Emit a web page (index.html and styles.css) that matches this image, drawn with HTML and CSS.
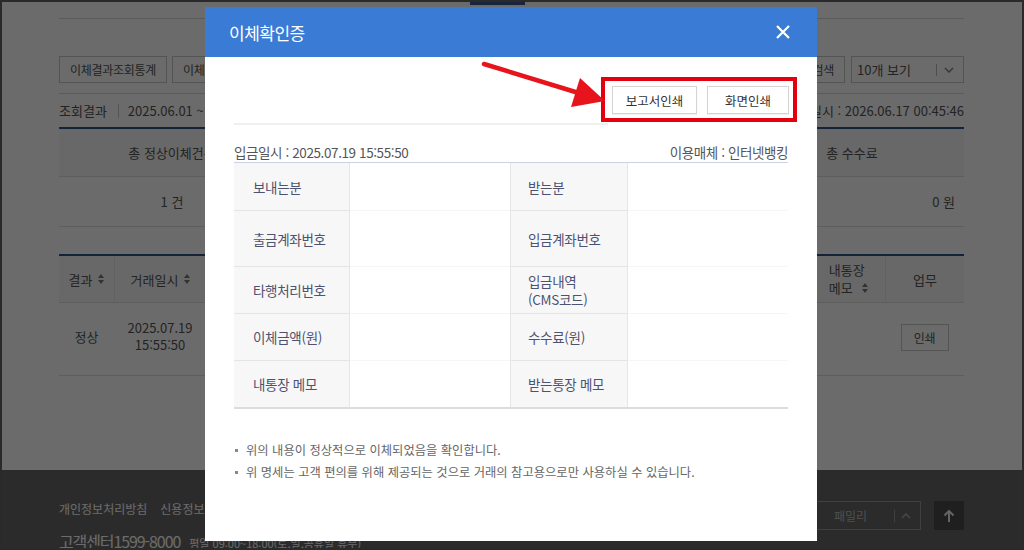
FILE: index.html
```html
<!DOCTYPE html>
<html lang="ko">
<head>
<meta charset="utf-8">
<title>이체확인증</title>
<link rel="stylesheet" href="styles.css">
</head>
<body>
<div class="frame">
  <div class="page">
    <div class="tabmark"></div>
    <div class="topline"></div>
    <div class="toolbar">
      <div class="tb-left">
        <button class="pbtn">이체결과조회통계</button>
        <button class="pbtn">이체결과조회</button>
      </div>
      <div class="tb-right">
        <button class="pbtn">상세검색</button>
        <div class="pselect"><span>10개 보기</span><i class="sep"></i><svg class="chev" width="10" height="6" viewBox="0 0 10 6"><path d="M1 1l4 4 4-4" fill="none" stroke="#888" stroke-width="1.6"/></svg></div>
      </div>
    </div>
    <div class="result">
      <div class="res-left"><span class="res-label">조회결과</span><i class="vsep"></i><span>2025.06.01 ~ 2025.07.31</span></div>
      <div class="res-right">조회일시 : 2026.06.17 00:45:46</div>
    </div>
    <div class="summary">
      <div class="sum-row sum-head">
        <div class="sc1">총 정상이체건수</div>
        <div class="sc2">총 이체금액</div>
        <div class="sc3">총 수수료</div>
      </div>
      <div class="sum-row sum-data">
        <div class="sc1">1 건</div>
        <div class="sc2">0 원</div>
        <div class="sc3 right">0 원</div>
      </div>
    </div>
    <div class="list">
      <div class="list-row list-head">
        <div class="lc1">결과 <svg class="sort" width="6" height="10" viewBox="0 0 6 10"><path d="M3 0L6 4H0zM3 10L0 6h6z" fill="#777"/></svg></div>
        <div class="lc2">거래일시 <svg class="sort" width="6" height="10" viewBox="0 0 6 10"><path d="M3 0L6 4H0zM3 10L0 6h6z" fill="#777"/></svg></div>
        <div class="lcmid"></div>
        <div class="lc3"><p>내통장<br>메모 <svg class="sort" width="6" height="10" viewBox="0 0 6 10"><path d="M3 0L6 4H0zM3 10L0 6h6z" fill="#777"/></svg></p></div>
        <div class="lc4">업무</div>
      </div>
      <div class="list-row list-data">
        <div class="lc1">정상</div>
        <div class="lc2">2025.07.19<br>15:55:50</div>
        <div class="lcmid"></div>
        <div class="lc3"></div>
        <div class="lc4"><button class="pbtn small">인쇄</button></div>
      </div>
    </div>
  </div>
  <div class="footer">
    <div class="ft-left">
      <div class="ft-links"><span>개인정보처리방침</span><span>신용정보활용체제</span></div>
      <div class="ft-cs"><span class="cs-big">고객센터1599-8000</span><span class="cs-small">평일 09:00~18:00(토,일,공휴일 휴무)</span></div>
    </div>
    <div class="ft-right">
      <div class="family"><span>패밀리</span><i class="sep dark"></i><svg width="10" height="6" viewBox="0 0 10 6"><path d="M1 5l4-4 4 4" fill="none" stroke="#aaa" stroke-width="1.6"/></svg></div>
      <div class="totop"><svg width="12" height="14" viewBox="0 0 12 14"><path d="M6 13V2M1.5 6.5L6 2l4.5 4.5" fill="none" stroke="#eee" stroke-width="2"/></svg></div>
    </div>
  </div>

  <div class="dim"></div>

  <div class="modal">
    <div class="modal-head">
      <h1>이체확인증</h1>
      <svg class="close" width="14" height="14" viewBox="0 0 14 14"><path d="M1 1l12 12M13 1L1 13" stroke="#fff" stroke-width="2.2" fill="none"/></svg>
    </div>
    <div class="modal-body">
      <div class="actions">
        <div class="mark">
          <button class="mbtn w1">보고서인쇄</button>
          <button class="mbtn w2">화면인쇄</button>
        </div>
      </div>
      <div class="divider"></div>
      <div class="info">
        <span>입금일시 : 2025.07.19 15:55:50</span>
        <span>이용매체 : 인터넷뱅킹</span>
      </div>
      <div class="detail">
        <div class="lab l1">보내는분</div><div class="val"></div><div class="lab l2">받는분</div><div class="val"></div>
        <div class="lab l1">출금계좌번호</div><div class="val"></div><div class="lab l2">입금계좌번호</div><div class="val"></div>
        <div class="lab l1">타행처리번호</div><div class="val"></div><div class="lab l2">입금내역<br>(CMS코드)</div><div class="val"></div>
        <div class="lab l1">이체금액(원)</div><div class="val"></div><div class="lab l2">수수료(원)</div><div class="val"></div>
        <div class="lab l1 last">내통장 메모</div><div class="val last"></div><div class="lab l2 last">받는통장 메모</div><div class="val last"></div>
      </div>
      <ul class="notes">
        <li>위의 내용이 정상적으로 이체되었음을 확인합니다.</li>
        <li>위 명세는 고객 편의를 위해 제공되는 것으로 거래의 참고용으로만 사용하실 수 있습니다.</li>
      </ul>
    </div>
  </div>

  <svg class="arrow" width="1024" height="550" viewBox="0 0 1024 550">
    <line x1="484" y1="64" x2="582" y2="94" stroke="#e8141c" stroke-width="4.5" stroke-linecap="round"/>
    <polygon points="605,101 571,107 580,78" fill="#e8141c"/>
  </svg>
</div>
</body>
</html>
```

FILE: styles.css
```css
* { box-sizing: border-box; margin: 0; padding: 0; }
html, body { width: 1024px; height: 550px; overflow: hidden; background: #222; }
body { font-family: "Noto Sans CJK KR", "Noto Sans", sans-serif; color: #555; }
button { font-family: inherit; cursor: pointer; }

.frame {
  position: relative;
  width: 1024px;
  height: 550px;
  border: 2px solid #2a2a2a;
  background: #fff;
  overflow: hidden;
}

/* ---------- background page ---------- */
.page { height: 468px; padding: 0 58px 0 57px; }
.tabmark { width: 55px; height: 3px; margin-left: 411px; background: #3a5894; }
.topline { margin-top: 13px; border-top: 1px solid #d8d8d8; }

.toolbar { margin-top: 37px; height: 27px; display: flex; justify-content: space-between; }
.tb-left, .tb-right { display: flex; gap: 5px; }
.tb-right { gap: 6px; }
.pbtn {
  height: 27px; padding: 0 10px; background: #fff; border: 1px solid #c9c9c9;
  font-size: 12px; color: #555; letter-spacing: -0.3px;
}
.pselect {
  width: 113px; height: 27px; border: 1px solid #c9c9c9; display: flex; align-items: center;
  padding-left: 5px; font-size: 13px; color: #555;
}
.pselect span { flex: 1; }
.sep { width: 1px; height: 12px; background: #bbb; margin-right: 7px; }
.chev { margin-right: 9px; }

.result {
  margin-top: 10px; border-top: 1px solid #d8d8d8; height: 34px;
  display: flex; justify-content: space-between; align-items: center; font-size: 13px; color: #555;
}
.res-left { display: flex; align-items: center; }
.vsep { width: 1px; height: 14px; background: #ccc; margin: 0 9px 0 11px; }

.summary { border-top: 2px solid #31548f; }
.sum-row { display: grid; grid-template-columns: 226px 1fr 224px; border-bottom: 1px solid #dedede; font-size: 13px; color: #555; }
.sum-head { height: 48px; background: #f8f8f8; }
.sum-data { height: 50px; }
.sum-row > div { display: flex; align-items: center; justify-content: center; }
.sum-row > .right { justify-content: flex-end; padding-right: 9px; }

.list { margin-top: 27px; border-top: 2px solid #31548f; }
.list-row { display: grid; grid-template-columns: 55px 92px 1fr 74px 79px; border-bottom: 1px solid #dedede; font-size: 13px; color: #555; }
.list-head { height: 47px; background: #f8f8f8; }
.list-data { height: 73px; }
.list-row > div { display: flex; align-items: center; justify-content: center; text-align: center; line-height: 17px; }
.list-data .lc1, .list-data .lc2 { padding-bottom: 6px; }
.list-head > div + div { border-left: 1px solid #e6e6e6; }
.sort { margin-left: 6px; }
.list-head .lc3 p { text-align: left; line-height: 18px; }
.pbtn.small { height: 27px; width: 48px; padding: 0; margin-top: -4px; }

/* footer */
.footer {
  height: 78px; background: #676767; padding: 0 58px 0 57px;
  display: flex; justify-content: space-between;
}
.ft-links { margin-top: 30px; display: flex; gap: 13px; font-size: 12px; line-height: 18px; color: #fff; }
.ft-cs { margin-top: 11px; display: flex; align-items: baseline; gap: 9px; color: #fff; }
.cs-big { font-size: 16px; line-height: 24px; letter-spacing: -1.1px; }
.cs-small { font-size: 11px; }
.ft-right { display: flex; gap: 13px; margin-top: 31px; height: 29px; }
.family {
  width: 116px; height: 29px; border: 1px solid #999; display: flex; align-items: center;
  padding-left: 28px; font-size: 12px; color: #bbb;
}
.family span { flex: 1; }
.sep.dark { background: #999; margin-right: 6px; }
.family svg { margin-right: 9px; }
.totop { width: 30px; height: 29px; background: #4a4a4a; display: flex; align-items: center; justify-content: center; }

.dim { position: absolute; inset: -2px; background: rgba(0, 0, 0, 0.58); }

/* ---------- modal ---------- */
.modal {
  position: absolute; left: 203px; top: 5px; width: 612px; height: 534px; background: #fff;
}
.modal-head {
  height: 50px; background: #3a7bd5; display: flex; align-items: center; justify-content: space-between;
  padding: 0 27px 0 24px;
}
.modal-head h1 { font-size: 17px; font-weight: 400; color: #fff; letter-spacing: -0.5px; }
.modal-body { padding: 20px 29px 0; }

.actions { display: flex; justify-content: flex-end; }
.mark {
  display: flex; gap: 10px; border: 4px solid #e3000f; padding: 5px 4px 4px 7px; margin-right: -9px;
}
.mbtn {
  height: 28px; background: #fff; border: 1px solid #d4d4d4; font-size: 12.5px; color: #333;
  box-shadow: 0 1px 1px rgba(0,0,0,0.06);
}
.w1 { width: 85px; }
.w2 { width: 82px; }

.divider { margin-top: 1px; height: 2px; background: #efefef; margin-right: 180px; }

.info {
  height: 37px; display: flex; justify-content: space-between; align-items: flex-end;
  padding-bottom: 1px; font-size: 13.5px; line-height: 18px; color: #555; letter-spacing: -0.4px;
}

.detail {
  display: grid; grid-template-columns: 116px 160px 118px 160px;
  grid-template-rows: 48px 56px 47px 47px 46px;
  border-top: 1px solid #c9d3e3; border-bottom: 2px solid #dcdcdc;
}
.lab {
  background: #f7f7f8; display: flex; align-items: center; font-size: 13.5px; line-height: 18px;
  color: #4d5270; border-bottom: 1px solid #e4e4e6; letter-spacing: -0.3px;
}
.l1 { padding-left: 19px; border-right: 1px solid #e6e6e8; }
.l2 { padding-left: 17px; border-left: 1px solid #e6e6e8; border-right: 1px solid #e6e6e8; }
.val { border-bottom: 1px solid #f6f6f6; }
.detail .last { border-bottom: none; }

.notes { list-style: none; margin-top: 30px; }
.notes li {
  position: relative; padding-left: 12px; font-size: 12.3px; line-height: 22px; color: #666;
}
.notes li::before {
  content: ""; position: absolute; left: 1px; top: 10px; width: 3px; height: 3px; background: #888;
}

.arrow { position: absolute; left: -2px; top: -2px; pointer-events: none; }
```
